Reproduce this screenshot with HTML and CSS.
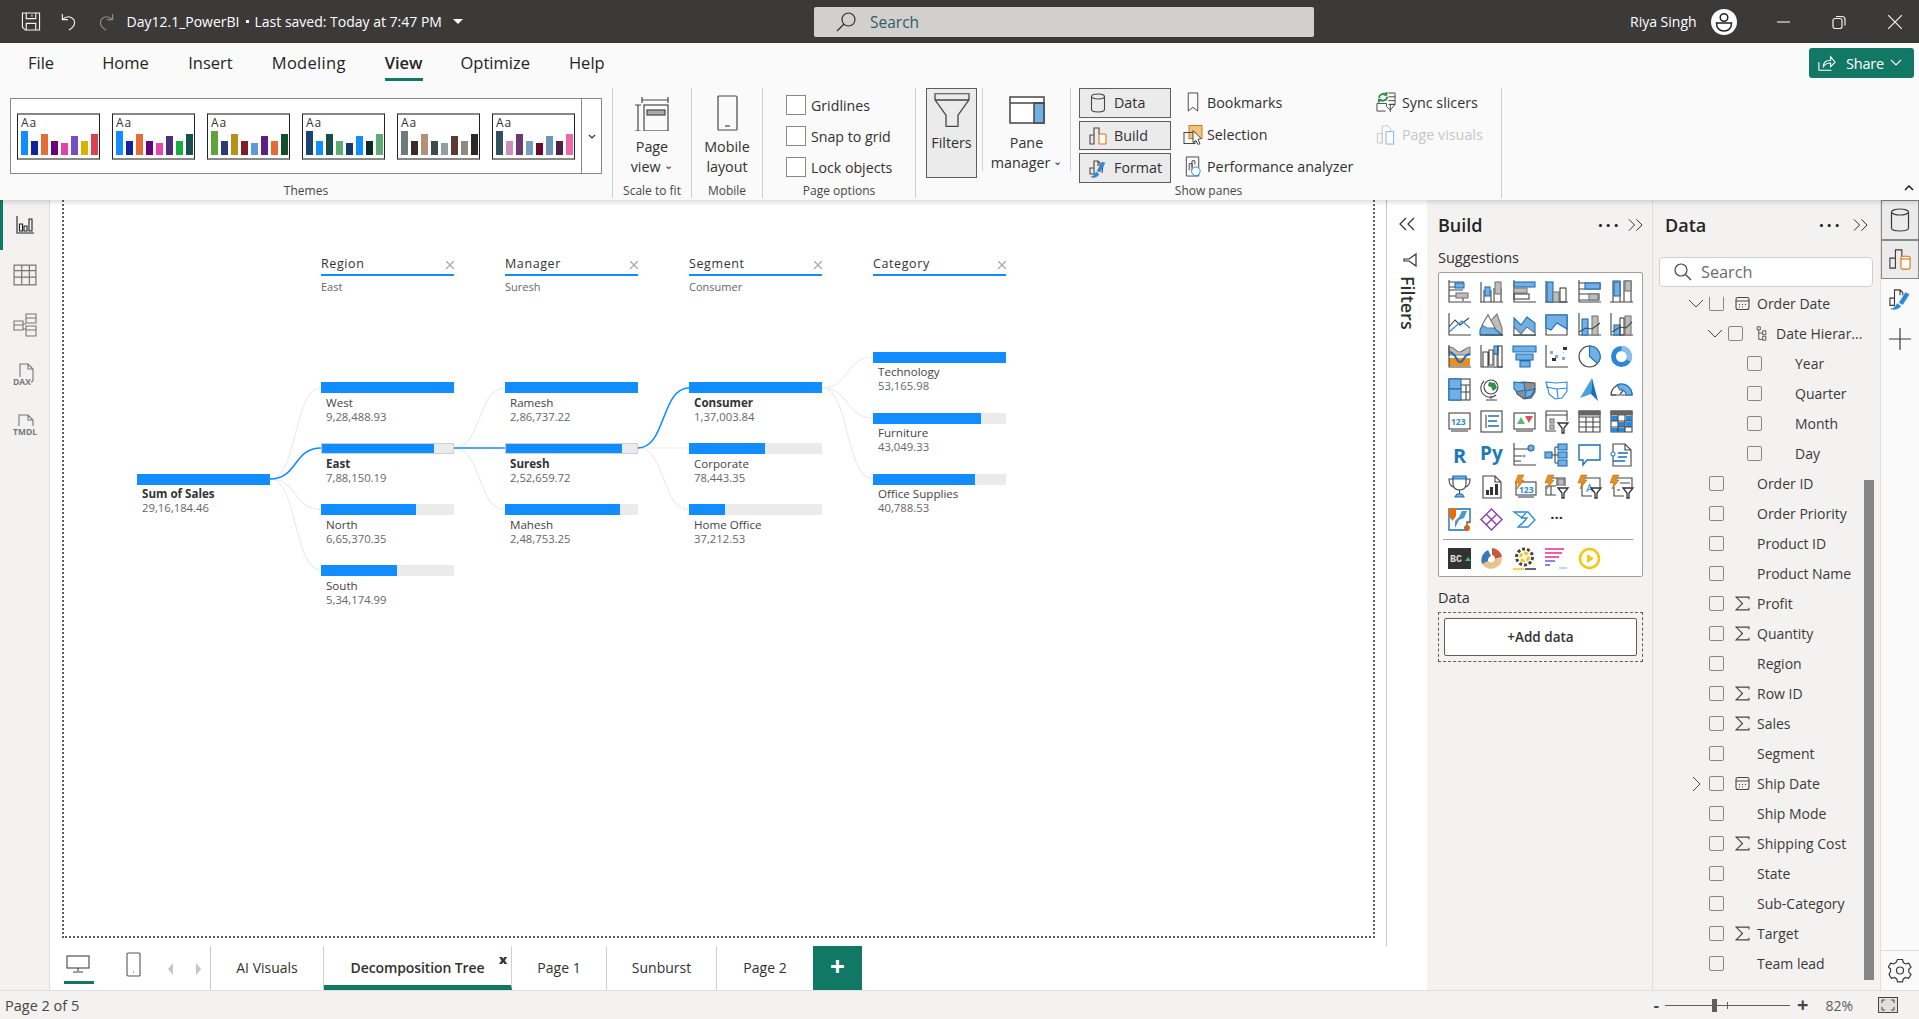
FILE: index.html
```html
<!DOCTYPE html>
<html lang="en">
<head>
<meta charset="utf-8">
<title>Day12.1_PowerBI</title>
<link rel="stylesheet" href="styles.css">
</head>
<body>
<header class="titlebar">
  <svg class="tb-save" viewBox="0 0 20 20"><path d="M1 1h18v18H4l-3-3zM5 1v6h10V1M5 19v-7h10v7M11 3v2"/></svg>
  <svg class="tb-undo" viewBox="0 0 16 20"><path d="M1 2v6h6M1 8c4-4 9-4 12 0 2 4 0 8-5 11"/></svg>
  <svg class="tb-redo" viewBox="0 0 16 20"><path d="M15 2v6H9M15 8c-4-4-9-4-12 0-2 4 0 8 5 11"/></svg>
  <span class="tb-file">Day12.1_PowerBI</span><span class="tb-dot"></span><span class="tb-saved">Last saved: Today at 7:47 PM</span><span class="tb-caret"></span>
  <div class="tb-search">
    <svg viewBox="0 0 20 20"><circle cx="12.5" cy="7.5" r="6.5"/><path d="M8 12l-7 7"/></svg>
    <span>Search</span>
  </div>
  <span class="tb-user">Riya Singh</span>
  <svg class="tb-avatar" viewBox="0 0 26 26"><circle cx="13" cy="13" r="13" fill="#fff"/><circle cx="13" cy="8.5" r="3.8" fill="none" stroke="#222" stroke-width="1.5"/><path d="M5.5 14h15c0 5-3 8-7.5 8s-7.5-3-7.5-8z" fill="none" stroke="#222" stroke-width="1.5"/></svg>
  <svg class="tb-min" viewBox="0 0 14 14"><path d="M0 7h14"/></svg>
  <svg class="tb-max" viewBox="0 0 14 14"><rect x="1" y="3.5" width="9" height="10" rx="2"/><path d="M4 1.5h6a3 3 0 0 1 3 3v6"/></svg>
  <svg class="tb-close" viewBox="0 0 14 14"><path d="M0 0l14 14M14 0L0 14"/></svg>
</header>

<section class="ribbon">
  <nav class="tabs">
    <span class="tab t-file">File</span>
    <span class="tab t-home">Home</span>
    <span class="tab t-insert">Insert</span>
    <span class="tab t-model">Modeling</span>
    <span class="tab tab-on t-view">View</span>
    <span class="tab t-opt">Optimize</span>
    <span class="tab t-help">Help</span>
    <button class="share">
      <svg viewBox="0 0 20 20"><path d="M1 9v9h14M6 14c0-5 3-7 8-7V3l5 6-5 5v-4c-4 0-6 1-8 4z"/></svg>
      <span>Share</span>
      <svg class="share-chev" viewBox="0 0 12 8"><path d="M1 1l5 5 5-5"/></svg>
    </button>
  </nav>
  <div class="toolbar">
    <div class="group g-themes">
      <div class="group-body">
        <div class="gallery">
          <div class="themes">
            <div class="theme"><span>Aa</span><svg viewBox="0 0 78 24"><rect x="0" y="0" width="7" height="24" fill="#118dff"/><rect x="10" y="10" width="7" height="14" fill="#12239e"/><rect x="20" y="3" width="7" height="21" fill="#e66c37"/><rect x="30" y="10" width="7" height="14" fill="#6b007b"/><rect x="40" y="12" width="7" height="12" fill="#e044a7"/><rect x="50" y="5" width="7" height="19" fill="#744ec2"/><rect x="60" y="10" width="7" height="14" fill="#d9b300"/><rect x="70" y="3" width="7" height="21" fill="#d64550"/></svg></div>
            <div class="theme"><span>Aa</span><svg viewBox="0 0 78 24"><rect x="0" y="0" width="7" height="24" fill="#118dff"/><rect x="10" y="10" width="7" height="14" fill="#12239e"/><rect x="20" y="3" width="7" height="21" fill="#e66c37"/><rect x="30" y="10" width="7" height="14" fill="#6b007b"/><rect x="40" y="12" width="7" height="12" fill="#e645ab"/><rect x="50" y="5" width="7" height="19" fill="#4a2f7e"/><rect x="60" y="10" width="7" height="14" fill="#1aab40"/><rect x="70" y="3" width="7" height="21" fill="#15524d"/></svg></div>
            <div class="theme"><span>Aa</span><svg viewBox="0 0 78 24"><rect x="0" y="0" width="7" height="24" fill="#60a33c"/><rect x="10" y="10" width="7" height="14" fill="#2e3b72"/><rect x="20" y="3" width="7" height="21" fill="#b3931c"/><rect x="30" y="10" width="7" height="14" fill="#7f1d2b"/><rect x="40" y="12" width="7" height="12" fill="#5d9ad6"/><rect x="50" y="5" width="7" height="19" fill="#5a1f87"/><rect x="60" y="10" width="7" height="14" fill="#e66c37"/><rect x="70" y="3" width="7" height="21" fill="#154d2f"/></svg></div>
            <div class="theme"><span>Aa</span><svg viewBox="0 0 78 24"><rect x="0" y="0" width="7" height="24" fill="#1a4373"/><rect x="10" y="10" width="7" height="14" fill="#118dff"/><rect x="20" y="3" width="7" height="21" fill="#1b4a4a"/><rect x="30" y="10" width="7" height="14" fill="#5fab76"/><rect x="40" y="12" width="7" height="12" fill="#143a6b"/><rect x="50" y="5" width="7" height="19" fill="#118dff"/><rect x="60" y="10" width="7" height="14" fill="#0d2b26"/><rect x="70" y="3" width="7" height="21" fill="#5fab76"/></svg></div>
            <div class="theme"><span>Aa</span><svg viewBox="0 0 78 24"><rect x="0" y="0" width="7" height="24" fill="#6d7b7b"/><rect x="10" y="10" width="7" height="14" fill="#3d2b27"/><rect x="20" y="3" width="7" height="21" fill="#b09179"/><rect x="30" y="10" width="7" height="14" fill="#3f4a4d"/><rect x="40" y="12" width="7" height="12" fill="#8e9fa0"/><rect x="50" y="5" width="7" height="19" fill="#5b3a30"/><rect x="60" y="10" width="7" height="14" fill="#8f8a80"/><rect x="70" y="3" width="7" height="21" fill="#2a2a2a"/></svg></div>
            <div class="theme"><span>Aa</span><svg viewBox="0 0 78 24"><rect x="0" y="0" width="7" height="24" fill="#35505f"/><rect x="10" y="10" width="7" height="14" fill="#cd8fb7"/><rect x="20" y="3" width="7" height="21" fill="#6a3a71"/><rect x="30" y="10" width="7" height="14" fill="#759dbd"/><rect x="40" y="12" width="7" height="12" fill="#6c0a2e"/><rect x="50" y="5" width="7" height="19" fill="#6a97b7"/><rect x="60" y="10" width="7" height="14" fill="#4a2349"/><rect x="70" y="3" width="7" height="21" fill="#ec67ab"/></svg></div>
          </div>
          <div class="gallery-more"><svg viewBox="0 0 8 5"><path d="M1 1l3 3 3-3"/></svg></div>
        </div>
      </div>
      <div class="group-label">Themes</div>
    </div>

    <div class="group g-scale">
      <div class="group-body big-col">
        <svg class="big-ic" viewBox="0 0 36 36"><path d="M8 2v6M8 5h26M34 2v6M1 10h6M4 10v26M1 36h6"/><rect x="10" y="10" width="24" height="26"/><rect x="13" y="15" width="18" height="5" fill="#aaa"/></svg>
        <div class="big-text">Page<br>view <i class="mini">⌄</i></div>
      </div>
      <div class="group-label">Scale to fit</div>
    </div>

    <div class="group g-mobile">
      <div class="group-body big-col">
        <svg class="big-ic mob" viewBox="0 0 21 36"><rect x="1" y="1" width="19" height="34" rx="1"/><path d="M8 31h5"/></svg>
        <div class="big-text">Mobile<br>layout</div>
      </div>
      <div class="group-label">Mobile</div>
    </div>

    <div class="group g-options">
      <div class="group-body opts">
        <label class="opt"><i></i>Gridlines</label>
        <label class="opt"><i></i>Snap to grid</label>
        <label class="opt"><i></i>Lock objects</label>
      </div>
      <div class="group-label">Page options</div>
    </div>

    <div class="group g-panes">
      <div class="group-body panes">
        <div class="filters-btn">
          <svg viewBox="0 0 36 36"><path d="M1 2h34v7L24 27v13h-12V27L1 9z" transform="scale(1 .86)"/><path d="M1 8h34" /></svg>
          <span>Filters</span>
        </div>
        <div class="pane-mgr">
          <svg viewBox="0 0 36 28"><rect x="1" y="1" width="34" height="26" fill="#fff"/><rect x="25" y="7" width="10" height="20" fill="#71afe5"/><path d="M1 7h34"/></svg>
          <div>Pane<br>manager<i class="mini"> ⌄</i></div>
        </div>
        <div class="pane-btns">
          <div class="pane-btn"><svg viewBox="0 0 16 20"><ellipse cx="8" cy="3.5" rx="6.5" ry="2.5"/><path d="M1.5 3.5v13c0 1.5 3 2.5 6.5 2.500s6.5-1 6.5-2.500v-13"/></svg>Data</div>
          <div class="pane-btn"><svg viewBox="0 0 18 20"><path d="M1 10h4v9H1zM5 19V3h5v6"/><rect class="or" x="10" y="9" width="7" height="10" rx="1"/></svg>Build</div>
          <div class="pane-btn"><svg viewBox="0 0 18 20"><path d="M1 10h4v6H1zM5 12V3h4v5M9 3l2 2v3M14 6l-1 9"/><path class="brush" d="M13 4l3 1-5 9-3-1zM7 14l3 2c-1 3-5 4-8 3 3-1 4-3 5-5z"/></svg>Format</div>
        </div>
        <div class="pane-links">
          <div class="pane-link"><svg viewBox="0 0 14 22"><path d="M2 1h10v19l-5-4-5 4z"/></svg>Bookmarks</div>
          <div class="pane-link"><svg viewBox="0 0 20 20"><rect class="sel" x="6" y="1" width="13" height="13"/><rect x="1" y="8" width="11" height="11"/><path class="cur" d="M10 6l8 8-3 1 2 4-2 1-2-4-3 2z"/></svg>Selection</div>
          <div class="pane-link"><svg viewBox="0 0 18 22"><path d="M2 1h13v20H2zM5 15V8h3v7M8 12V5h3v4"/><circle class="tim" cx="12" cy="16" r="4.5"/></svg>Performance analyzer</div>
        </div>
        <div class="pane-links sync">
          <div class="pane-link"><svg viewBox="0 0 21 22"><path d="M13 1h7v12h-7M13 5h7M13 9h7M1 12h10v3l4 4v-6h5l-5 6v2M1 12v8h9"/><path class="syn" d="M3 6a5 5 0 0 1 8-3M12 5a5 5 0 0 1-8 3M11 0v3H8M3 11V8h3"/></svg>Sync slicers</div>
          <div class="pane-link off"><svg viewBox="0 0 20 22"><path d="M1 10h5v10H1zM6 20V2h6l3 3v3"/><rect class="ph" x="10" y="8" width="8" height="13"/></svg>Page visuals</div>
        </div>
      </div>
      <div class="group-label">Show panes</div>
    </div>
  </div>
  <svg class="collapse-ribbon" viewBox="0 0 10 6"><path d="M1 5l4-4 4 4"/></svg>
</section>

<main class="main">
  <aside class="nav">
    <div class="nav-item nav-on"><svg viewBox="0 0 18 18"><path d="M1 0v17h17"/><path d="M3.5 8h3v7h-3zM8 10h3v5H8zM13 3h3v12h-3z"/></svg></div>
    <div class="nav-item"><svg viewBox="0 0 22 20"><path d="M1 1h20v18H1zM1 6h20M1 12h20M8 1v18M15 1v18"/></svg></div>
    <div class="nav-item"><svg viewBox="0 0 24 24"><path d="M1 8h9v9H1zM13 1h10v9H13zM13 13h10v10H13zM13 5h10M13 17h10M1 12h9M10 11h3M10 16h3"/></svg></div>
    <div class="nav-item"><svg viewBox="0 0 24 24"><path d="M7 14V1h8l5 5v10c0 2-1 3-2 3M15 1v5h5"/><text x="0" y="22" class="nav-t">DAX</text></svg></div>
    <div class="nav-item"><svg viewBox="0 0 24 24"><path d="M6 13V2h9l5 5v6M15 2v5h5"/><text x="0" y="22" class="nav-t">TMDL</text></svg></div>
  </aside>

  <div class="center">
    <div class="canvas-row">
      <div class="canvas">
        <svg class="links" viewBox="50 200 1337 746">
          <path class="lk" d="M270 479C298 479 293 388 321 388"/>
          <path class="lk" d="M270 479C298 479 293 509.5 321 509.5"/>
          <path class="lk" d="M270 479C298 479 293 570 321 570"/>
          <path class="lk-on" d="M270 479C298 479 293 448 321 448"/>
          <path class="lk" d="M454 448C482 448 477 388 505 388"/>
          <path class="lk" d="M454 448C482 448 477 509.5 505 509.5"/>
          <path class="lk-on" d="M454 448H505"/>
          <path class="lk" d="M638 448H689"/>
          <path class="lk" d="M638 448C666 448 661 509.5 689 509.5"/>
          <path class="lk-on" d="M638 448C666 448 661 388 689 388"/>
          <path class="lk" d="M822 388C850 388 845 357 873 357"/>
          <path class="lk" d="M822 388C850 388 845 418 873 418"/>
          <path class="lk" d="M822 388C850 388 845 479 873 479"/>
        </svg>
        <div class="tree">
          <div class="col col-root">
            <div class="node">
              <div class="track"><div class="fill" style="width:100%"></div></div>
              <div class="lbl sel-l">Sum of Sales</div><div class="val">29,16,184.46</div>
            </div>
          </div>
          <div class="col">
            <div class="head"><span>Region</span><svg viewBox="0 0 8 8"><path d="M0 0l8 8M8 0L0 8"/></svg></div>
            <div class="sub">East</div>
            <div class="nodes">
              <div class="node"><div class="track"><div class="fill" style="width:100%"></div></div><div class="lbl">West</div><div class="val">9,28,488.93</div></div>
              <div class="node"><div class="track picked"><div class="fill" style="width:85%"></div></div><div class="lbl sel-l">East</div><div class="val">7,88,150.19</div></div>
              <div class="node"><div class="track"><div class="fill" style="width:71.6%"></div></div><div class="lbl">North</div><div class="val">6,65,370.35</div></div>
              <div class="node"><div class="track"><div class="fill" style="width:57.5%"></div></div><div class="lbl">South</div><div class="val">5,34,174.99</div></div>
            </div>
          </div>
          <div class="col">
            <div class="head"><span>Manager</span><svg viewBox="0 0 8 8"><path d="M0 0l8 8M8 0L0 8"/></svg></div>
            <div class="sub">Suresh</div>
            <div class="nodes">
              <div class="node"><div class="track"><div class="fill" style="width:100%"></div></div><div class="lbl">Ramesh</div><div class="val">2,86,737.22</div></div>
              <div class="node"><div class="track picked"><div class="fill" style="width:88%"></div></div><div class="lbl sel-l">Suresh</div><div class="val">2,52,659.72</div></div>
              <div class="node"><div class="track"><div class="fill" style="width:86.7%"></div></div><div class="lbl">Mahesh</div><div class="val">2,48,753.25</div></div>
            </div>
          </div>
          <div class="col">
            <div class="head"><span>Segment</span><svg viewBox="0 0 8 8"><path d="M0 0l8 8M8 0L0 8"/></svg></div>
            <div class="sub">Consumer</div>
            <div class="nodes">
              <div class="node"><div class="track"><div class="fill" style="width:100%"></div></div><div class="lbl sel-l">Consumer</div><div class="val">1,37,003.84</div></div>
              <div class="node"><div class="track"><div class="fill" style="width:57.3%"></div></div><div class="lbl">Corporate</div><div class="val">78,443.35</div></div>
              <div class="node"><div class="track"><div class="fill" style="width:27%"></div></div><div class="lbl">Home Office</div><div class="val">37,212.53</div></div>
            </div>
          </div>
          <div class="col col-last">
            <div class="head"><span>Category</span><svg viewBox="0 0 8 8"><path d="M0 0l8 8M8 0L0 8"/></svg></div>
            <div class="sub"></div>
            <div class="nodes">
              <div class="node"><div class="track"><div class="fill" style="width:100%"></div></div><div class="lbl">Technology</div><div class="val">53,165.98</div></div>
              <div class="node"><div class="track"><div class="fill" style="width:81%"></div></div><div class="lbl">Furniture</div><div class="val">43,049.33</div></div>
              <div class="node"><div class="track"><div class="fill" style="width:77%"></div></div><div class="lbl">Office Supplies</div><div class="val">40,788.53</div></div>
            </div>
          </div>
        </div>
      </div>
      <aside class="filters">
        <svg class="f-coll" viewBox="0 0 16 14"><path d="M7 1L1 7l6 6M15 1L9 7l6 6"/></svg>
        <svg class="f-ic" viewBox="0 0 14 14"><path d="M13 1v12L6 8H1V6h5z"/></svg>
        <span class="f-text">Filters</span>
      </aside>
    </div>
    <div class="pagebar">
      <div class="views">
        <div class="view-btn view-on"><svg viewBox="0 0 24 18"><rect x="1" y="1" width="22" height="12" fill="#fff"/><path d="M12 13v3M7 17h10"/></svg></div>
        <svg class="phone" viewBox="0 0 15 25"><rect x="1" y="1" width="13" height="23" rx="1"/><path d="M7 20h1"/></svg>
        <i class="arr arr-l"></i><i class="arr arr-r"></i>
      </div>
      <div class="ptab w-ai">AI Visuals</div>
      <div class="ptab ptab-on w-dt">Decomposition Tree<b>x</b></div>
      <div class="ptab w-p1">Page 1</div>
      <div class="ptab w-sb">Sunburst</div>
      <div class="ptab w-p2">Page 2</div>
      <div class="ptab-add">+</div>
    </div>
  </div>

  <aside class="build">
    <div class="pane-head"><h2>Build</h2><span class="dots">···</span><svg class="dbl" viewBox="0 0 16 14"><path d="M1 1l6 6-6 6M9 1l6 6-6 6"/></svg></div>
    <div class="p-label">Suggestions</div>
    <div class="viz-box">
      <div class="viz-grid">
        <svg class="vi" viewBox="0 0 23 23"><path d="M1 0v22h22M1 2h14v5H1zM1 10h14M1 16h14v5"/><rect class="bl" x="7" y="3" width="9" height="5"/><rect class="gr" x="8" y="13" width="12" height="5"/></svg>
        <svg class="vi" viewBox="0 0 23 23"><path d="M0 22h23M1 2v20M4 10v12h7V10M14 8v14h7V8"/><rect class="bl" x="5" y="7" width="5" height="9"/><rect class="gr" x="15" y="2" width="6" height="12"/></svg>
        <svg class="vi" viewBox="0 0 23 23"><path d="M1 0v22h22"/><rect class="bl" x="1" y="2" width="21" height="5"/><rect class="gr" x="1" y="8" width="13" height="5"/><rect x="1" y="14" width="15" height="5"/></svg>
        <svg class="vi" viewBox="0 0 23 23"><path d="M0 22h23M1 1v21"/><rect class="bl" x="2" y="2" width="6" height="20"/><rect class="gr" x="8" y="12" width="6" height="10"/><rect x="15" y="8" width="6" height="14"/></svg>
        <svg class="vi" viewBox="0 0 23 23"><path d="M1 0v22h22M1 3h21v6H1zM1 14h20v6H1z"/><rect class="bl" x="7" y="3" width="15" height="6"/><rect class="gr" x="11" y="14" width="9" height="6"/></svg>
        <svg class="vi" viewBox="0 0 23 23"><path d="M0 22h23M3 1h7v21H3zM14 1h7v21h-7z"/><rect class="bl" x="4" y="2" width="6" height="14"/><rect class="gr" x="15" y="1" width="6" height="10"/></svg>

        <svg class="vi" viewBox="0 0 23 23"><path d="M1 0v22h22M1 14L7 7l5 5 9-7"/><path class="bs" d="M1 19l7-6 6-5 8 7"/></svg>
        <svg class="vi" viewBox="0 0 23 23"><path class="gr" d="M10 9l4-5 3-3 5 14v7H6z"/><path class="bl" d="M0 22V17L8 2l7 14 7 6z"/><path class="wh" d="M8 2l-6 10 5 3 8 0z"/><path d="M0 22h23"/></svg>
        <svg class="vi" viewBox="0 0 23 23"><path class="bl" d="M1 5l7 7 6-8 8 6v12H1z"/><path class="wh" d="M1 14l7 7 6-7 8 6v2H1z"/><path d="M0 22h23"/></svg>
        <svg class="vi" viewBox="0 0 23 23"><path d="M1 2h21v20H1z"/><path class="bl" d="M1 2h21v14l-10-6-6 7-5-2z"/></svg>
        <svg class="vi" viewBox="0 0 23 23"><path d="M1 0v22h22"/><rect class="bl" x="4" y="6" width="6" height="16"/><rect class="gr" x="14" y="3" width="6" height="19"/><path d="M1 19l7-4 6 1 8-6"/></svg>
        <svg class="vi" viewBox="0 0 23 23"><path d="M1 0v22h22"/><rect class="bl" x="4" y="12" width="6" height="10"/><rect class="gr" x="15" y="3" width="6" height="19"/><rect x="10" y="5" width="4" height="17"/><path d="M2 19l8-5 6 1 6-6"/></svg>

        <svg class="vi" viewBox="0 0 23 23"><path class="gr" d="M1 2c6-1 7 6 11 5s6-5 10-5v8H1z"/><path class="or2" d="M1 13h21v8H1z"/><path class="bs2" d="M1 7c7 0 7 10 11 10s4-8 10-8"/><path d="M1 0v22h22"/></svg>
        <svg class="vi" viewBox="0 0 23 23"><path d="M1 0v22h22M3 7h5v15H3zM9 5h4v15H9z"/><rect class="wh" x="14" y="9" width="3" height="13"/><rect class="bl" x="14" y="1" width="4" height="8"/><rect x="18" y="1" width="4" height="21"/></svg>
        <svg class="vi" viewBox="0 0 23 23"><path class="bl" d="M0 1h23v6H0zM3 9h17v6H3zM7 16h10v6H7z"/></svg>
        <svg class="vi" viewBox="0 0 23 23"><path d="M1 0v22h22"/><path class="fk" d="M18 2h4v3h-4zM7 13h4v3H7z"/><path class="fb" d="M5 6h3v3H5zM10 10h3v3h-3zM17 12h3v3h-3zM18 7h1v1h-1z"/></svg>
        <svg class="vi" viewBox="0 0 23 23"><circle cx="11.5" cy="11.5" r="10.5" fill="#fff"/><path class="bl" d="M11.5 1v10.5l8 7a10.5 10.5 0 0 0-8-17.5z"/></svg>
        <svg class="vi" viewBox="0 0 23 23"><circle class="ring" cx="11.5" cy="11.5" r="8"/><path class="ring2" d="M11.5 3.5a8 8 0 0 1 7 12"/></svg>

        <svg class="vi" viewBox="0 0 23 23"><rect x="1" y="1" width="21" height="21"/><rect class="bl" x="1" y="1" width="12" height="10"/><rect class="bl" x="1" y="11" width="12" height="11"/><path d="M13 7h9M18 7v15M13 14h9"/></svg>
        <svg class="vi" viewBox="0 0 23 23"><circle cx="11" cy="9" r="7" class="earth"/><path class="land" d="M9 4l6 1 2 5-4 3-2-4-3-1z"/><path d="M4 3a9 9 0 0 0 12 14M11 18v3M6 22h11"/></svg>
        <svg class="vi" viewBox="0 0 23 23"><path class="gr2" d="M1 5l9-1 12 1v9l-4 6-7 1-7-5z"/><path class="bl" d="M1 4l10 1 1 7-8 2-3-3zM13 13l9-2-4 7-6 2z"/></svg>
        <svg class="vi" viewBox="0 0 23 23"><path class="wb" d="M1 4l10 1 11-1v9l-5 7-7 1-6-5-1-5z"/><path class="bs" d="M1 9l11 2 1 9M12 11l10-1"/></svg>
        <svg class="vi" viewBox="0 0 23 23"><path class="arrow" d="M14 0L2 20l11-4z"/><path class="arrow2" d="M14 0l6 23-7-7z"/></svg>
        <svg class="vi" viewBox="0 0 23 23"><path d="M1 17a10.5 10.5 0 0 1 21 0z" fill="#fff"/><path class="bl" d="M7 7a10.5 10.5 0 0 1 15 10h-6a5 5 0 0 0-6-5z"/><path d="M1 17h5M10 16l3-3"/></svg>

        <svg class="vi" viewBox="0 0 23 23"><rect x="1" y="3" width="21" height="16"/><path d="M3 21h17"/><text class="t123" x="3" y="15">123</text></svg>
        <svg class="vi" viewBox="0 0 23 23"><rect x="1" y="1" width="21" height="21"/><path d="M6 5v13"/><path class="bs3" d="M8 6h11M8 11h9M8 16h11"/></svg>
        <svg class="vi" viewBox="0 0 23 23"><rect x="1" y="3" width="21" height="16"/><path d="M3 21h17"/><path class="tg" d="M4 14l4-7 4 7z"/><path class="tr" d="M12 6h8l-4 7z"/></svg>
        <svg class="vi" viewBox="0 0 23 23"><path d="M1 1h21v10M1 5h21M1 1v20h10"/><rect class="gr" x="5" y="9" width="4" height="4"/><rect class="gr" x="5" y="15" width="4" height="4"/><path class="fn" d="M13 13h10l-4 5v5h-2v-5z"/></svg>
        <svg class="vi" viewBox="0 0 23 23"><path d="M1 1h21v21H1zM1 7h21M1 12h21M1 17h21M8 7v15M15 7v15"/><path class="top" d="M1 1h21v4H1z"/></svg>
        <svg class="vi" viewBox="0 0 23 23"><path d="M1 1h21v21H1z"/><path class="top" d="M1 1h21v4H1z"/><path class="mat" d="M8 6v5H1V6zM22 6v5h-6V6zM15 12v5H8v-5zM22 12v5h-6v-5zM8 18v4H1v-4zM15 18v4H8v-4z"/><path d="M8 5v17M15 5v17M1 11h21M1 17h21"/></svg>

        <svg class="vi" viewBox="0 0 23 23"><text class="tr-l" x="5" y="20">R</text></svg>
        <svg class="vi wide" viewBox="0 0 23 23"><text class="tr-l py" x="0" y="17">Py</text></svg>
        <svg class="vi" viewBox="0 0 23 23"><path d="M1 0v22h22M1 6h14M1 13h8M1 18h7"/><circle class="bl2" cx="18" cy="5" r="3"/><circle class="gc" cx="11" cy="13" r="1.5"/></svg>
        <svg class="vi" viewBox="0 0 23 23"><rect class="bl" x="0" y="9" width="7" height="6"/><rect class="bl" x="13" y="1" width="9" height="6"/><rect class="bl" x="13" y="9" width="9" height="6"/><rect class="bl" x="13" y="17" width="9" height="6"/><path d="M7 12h6M10 4v16M10 4h3M10 20h3"/></svg>
        <svg class="vi" viewBox="0 0 23 23"><path class="bub" d="M1 2h21v15H9l-4 5v-5H1z"/></svg>
        <svg class="vi" viewBox="0 0 23 23"><path d="M3 1h12l6 6v16H3zM15 1v6h6"/><circle class="bc" cx="3" cy="11" r="2"/><path class="bs3" d="M8 10h10M8 14h9M3 18h12"/></svg>

        <svg class="vi" viewBox="0 0 23 23"><path d="M5 2h13v7c0 4-3 6-6.5 6S5 13 5 9zM5 4H1c0 5 2 7 4 8M18 4h4c0 5-2 7-4 8"/><path class="bl" d="M5 1h13v3H5zM9 19h5l2 3H7z"/><path d="M11.5 15v4"/></svg>
        <svg class="vi" viewBox="0 0 23 23"><path d="M3 1h12l6 6v16H3zM15 1v6h6"/><path class="fk" d="M6 15h3v5H6zM10 12h3v8h-3zM15 9h3v11h-3z"/></svg>
        <svg class="vi" viewBox="0 0 23 23"><rect x="3" y="7" width="20" height="13"/><path d="M5 22h16"/><text class="t123" x="6" y="18">123</text><path class="bolt" d="M5 0h6L8 5h3l-7 9 2-6H2z"/></svg>
        <svg class="vi" viewBox="0 0 23 23"><path d="M6 3h14v8M1 11h10M1 11v9h10M12 3v8M6 11v9"/><rect class="gr" x="13" y="4" width="6" height="6"/><path class="fn" d="M13 13h10l-4 5v5h-2v-5z"/><path class="bolt" d="M3 0h6L6 5h3l-7 9 2-6H0z"/></svg>
        <svg class="vi" viewBox="0 0 23 23"><path d="M6 3h16v9M4 12v9h10M4 8v4"/><text class="ta" x="8" y="17">A</text><path class="fn" d="M13 13h10l-4 5v5h-2v-5z"/><path class="bolt" d="M3 0h6L6 5h3l-7 9 2-6H0z"/></svg>
        <svg class="vi" viewBox="0 0 23 23"><path d="M6 3h16v9M4 12v9h10M10 8h10M7 15h3"/><path class="fn" d="M13 13h10l-4 5v5h-2v-5z"/><path class="bolt" d="M3 0h6L6 5h3l-7 9 2-6H0z"/></svg>

        <svg class="vi" viewBox="0 0 23 23"><path class="arc" d="M1 1h21v13h-3v8H1z"/><path class="arc2" d="M7 20l4-8 5-2 3-7h-5l-3 6-4 4z"/><path class="pin" d="M1 0h7v8l-3.5 5L1 8z"/><circle class="dot-o" cx="19" cy="20" r="3"/><circle class="dot-o" cx="21" cy="14" r="1.5"/></svg>
        <svg class="vi" viewBox="0 0 23 23"><path class="pa" d="M11.5 1L22 11.5 11.5 22 1 11.5zM6 6l5.5 5.5L6 17M17 6l-5.5 5.5L17 17"/></svg>
        <svg class="vi" viewBox="0 0 23 23"><path class="au" d="M1 4h14l7 8-7 7H5l7-7z"/><path class="au" d="M8 10l6 0-6 7M13 5l-5 5"/></svg>
        <span class="more-viz">···</span>
        <span></span><span></span>
      </div>
      <div class="viz-sep"></div>
      <div class="viz-grid">
        <svg class="vi" viewBox="0 0 23 23"><rect x="0" y="1" width="23" height="21" fill="#333" stroke="none"/><text class="tbc" x="2" y="15">BC</text><path class="tg2" d="M17 14l3-4 3 4z"/></svg>
        <svg class="vi" viewBox="0 0 23 23"><path class="c1" d="M12 1a11 11 0 0 1 10 9l-7 2a4 4 0 0 0-3-4z"/><path class="c2" d="M22 11a11 11 0 0 1-20 6l6-3a4 4 0 0 0 7-2z"/><path class="c3" d="M2 17A11 11 0 0 1 8 3l3 6a5 5 0 0 0-3 5z"/></svg>
        <svg class="vi" viewBox="0 0 23 23"><circle class="y1" cx="11.5" cy="10" r="8"/><circle class="y2" cx="11.5" cy="10" r="4"/><path class="y3" d="M0 22h11"/><path class="y4" d="M12 22h11"/></svg>
        <svg class="vi" viewBox="0 0 23 23"><path class="p1" d="M0 2h19M0 6h17M0 10h14"/><path class="p2" d="M0 14h10M0 18h5"/><path class="p3" d="M14 21h8"/></svg>
        <svg class="vi" viewBox="0 0 23 23"><circle class="y5" cx="11.5" cy="11.5" r="9.5"/><path class="y6" d="M9 7l7 4.5-7 4.5z"/></svg>
        <span></span>
      </div>
    </div>
    <div class="p-label p-data">Data</div>
    <div class="add-wrap"><button class="add-btn">+Add data</button></div>
  </aside>

  <aside class="data">
    <div class="pane-head"><h2>Data</h2><span class="dots">···</span><svg class="dbl" viewBox="0 0 16 14"><path d="M1 1l6 6-6 6M9 1l6 6-6 6"/></svg></div>
    <div class="d-search"><svg viewBox="0 0 18 18"><circle cx="7" cy="7" r="6"/><path d="M11.5 11.5L17 17"/></svg><span>Search</span></div>
    <div class="d-list">
      <div class="row first"><span class="chev"><svg viewBox="0 0 14 8"><path d="M0 0l7 7 7-7"/></svg></span><i class="cb"></i><span class="ico"><svg viewBox="0 0 15 14"><rect x="1" y="1" width="13" height="12" rx="2"/><path d="M1 4.5h13M4 8h1M7 8h1M10 8h1M4 10.5h1M7 10.5h1"/></svg></span>Order Date</div>
      <div class="row l1"><span class="chev"><svg viewBox="0 0 14 8"><path d="M0 0l7 7 7-7"/></svg></span><i class="cb"></i><span class="ico"><svg viewBox="0 0 15 19"><path d="M2 1h4v4H2zM4 5v12h5M4 9h5M9 6h4v5H9zM9 13h4v5H9z"/></svg></span>Date Hierar...</div>
      <div class="row l2"><span class="chev"></span><i class="cb"></i><span class="ico"></span>Year</div>
      <div class="row l2"><span class="chev"></span><i class="cb"></i><span class="ico"></span>Quarter</div>
      <div class="row l2"><span class="chev"></span><i class="cb"></i><span class="ico"></span>Month</div>
      <div class="row l2"><span class="chev"></span><i class="cb"></i><span class="ico"></span>Day</div>
      <div class="row"><span class="chev"></span><i class="cb"></i><span class="ico"></span>Order ID</div>
      <div class="row"><span class="chev"></span><i class="cb"></i><span class="ico"></span>Order Priority</div>
      <div class="row"><span class="chev"></span><i class="cb"></i><span class="ico"></span>Product ID</div>
      <div class="row"><span class="chev"></span><i class="cb"></i><span class="ico"></span>Product Name</div>
      <div class="row"><span class="chev"></span><i class="cb"></i><span class="ico"><svg viewBox="0 0 14 14"><path d="M13 3V1H1l6 6-6 6h12v-2"/></svg></span>Profit</div>
      <div class="row"><span class="chev"></span><i class="cb"></i><span class="ico"><svg viewBox="0 0 14 14"><path d="M13 3V1H1l6 6-6 6h12v-2"/></svg></span>Quantity</div>
      <div class="row"><span class="chev"></span><i class="cb"></i><span class="ico"></span>Region</div>
      <div class="row"><span class="chev"></span><i class="cb"></i><span class="ico"><svg viewBox="0 0 14 14"><path d="M13 3V1H1l6 6-6 6h12v-2"/></svg></span>Row ID</div>
      <div class="row"><span class="chev"></span><i class="cb"></i><span class="ico"><svg viewBox="0 0 14 14"><path d="M13 3V1H1l6 6-6 6h12v-2"/></svg></span>Sales</div>
      <div class="row"><span class="chev"></span><i class="cb"></i><span class="ico"></span>Segment</div>
      <div class="row"><span class="chev"><svg class="chev-r" viewBox="0 0 8 14"><path d="M0 0l7 7-7 7"/></svg></span><i class="cb"></i><span class="ico"><svg viewBox="0 0 15 14"><rect x="1" y="1" width="13" height="12" rx="2"/><path d="M1 4.5h13M4 8h1M7 8h1M10 8h1M4 10.5h1M7 10.5h1"/></svg></span>Ship Date</div>
      <div class="row"><span class="chev"></span><i class="cb"></i><span class="ico"></span>Ship Mode</div>
      <div class="row"><span class="chev"></span><i class="cb"></i><span class="ico"><svg viewBox="0 0 14 14"><path d="M13 3V1H1l6 6-6 6h12v-2"/></svg></span>Shipping Cost</div>
      <div class="row"><span class="chev"></span><i class="cb"></i><span class="ico"></span>State</div>
      <div class="row"><span class="chev"></span><i class="cb"></i><span class="ico"></span>Sub-Category</div>
      <div class="row"><span class="chev"></span><i class="cb"></i><span class="ico"><svg viewBox="0 0 14 14"><path d="M13 3V1H1l6 6-6 6h12v-2"/></svg></span>Target</div>
      <div class="row"><span class="chev"></span><i class="cb"></i><span class="ico"></span>Team lead</div>
    </div>
    <div class="scrollbar"></div>
  </aside>

  <aside class="rail">
    <div class="rail-btn on"><svg viewBox="0 0 20 24"><ellipse cx="10" cy="4" rx="8.5" ry="3"/><path d="M1.5 4v16c0 2 4 3 8.5 3s8.5-1 8.5-3V4"/></svg></div>
    <div class="rail-btn on"><svg viewBox="0 0 24 24"><path d="M1 11h6v11H1zM7 22V2h7v7"/><rect class="or" x="13" y="9" width="10" height="14" rx="2"/><path class="or" d="M13 12h10"/></svg></div>
    <div class="rail-btn"><svg viewBox="0 0 24 24"><path d="M1 11h5v8H1zM6 13V2h6v6M12 2l3 3v3"/><path class="brush" d="M18 5l4 2-7 11-4-2zM9 17l4 3c-2 3-7 4-11 3 4-1 5-3 7-6z"/></svg></div>
    <div class="rail-btn"><svg viewBox="0 0 22 22"><path d="M0 11h22M11 0v22"/></svg></div>
    <div class="rail-gear"><svg viewBox="0 0 24 24"><path d="M9.5 1h5l.8 3 2.4 1.4 3-.8 2.3 4-2.200 2.200v2.800l2.200 2.200-2.300 4-3-.8-2.400 1.400-.8 3h-5l-.8-3-2.400-1.400-3 .8-2.300-4L2.500 13.200v-2.800L.3 8.600l2.300-4 3 .8L8 4z" transform="translate(0 -.5)"/><circle cx="12" cy="11.500" r="3.500"/></svg></div>
  </aside>
</main>

<footer class="status">
  <span class="st-page">Page 2 of 5</span>
  <div class="zoom">
    <span class="z-minus">-</span>
    <div class="z-track"><i class="z-thumb"></i><i class="z-tick"></i></div>
    <span class="z-plus">+</span>
    <span class="z-val">82%</span>
    <svg class="z-fit" viewBox="0 0 20 16"><rect x=".5" y=".5" width="19" height="15" fill="#e1dfdd"/><path d="M4 6V3h3M13 3h3v3M16 10v3h-3M7 13H4v-3"/></svg>
  </div>
</footer>
</body>
</html>
```
FILE: styles.css
```css
* { box-sizing: border-box; }
html, body { margin: 0; padding: 0; }
body {
  width: 1919px; height: 1019px; overflow: hidden;
  display: flex; flex-direction: column;
  font-family: "Open Sans", "Noto Sans", sans-serif;
  color: #323130; background: #f3f2f1;
}
svg { display: block; fill: none; }

/* title bar */
.titlebar {
  height: 43px; flex: none; background: #3b3a39; color: #fff;
  display: flex; align-items: center; font-size: 14px;
  position: relative;
}
.titlebar svg { stroke: #f3f2f1; stroke-width: 1.2; flex: none; }
.tb-save { width: 20px; height: 19px; margin-left: 21px; }
.tb-undo { width: 16px; height: 19px; margin-left: 20px; }
.tb-redo { width: 16px; height: 19px; margin-left: 21px; opacity: .45; }
.tb-file { margin-left: 12.5px; width: 112px; flex: none; white-space: nowrap; }
.tb-dot { width: 3px; height: 3px; background: #fff; margin: 0 6px 0 7px; flex: none; }
.tb-saved { width: 190px; flex: none; white-space: nowrap; }
.tb-caret { width: 0; height: 0; border: 5px solid transparent; border-top: 5px solid #fff; border-bottom: 0; margin-left: 8px; flex: none; }
.tb-search {
  width: 500px; height: 30px; margin-left: 351.5px; background: #d2d0ce; border-radius: 2px; flex: none;
  display: flex; align-items: center; padding-left: 22px; color: #2f5d62; font-size: 15.5px;
}
.titlebar .tb-search svg { width: 20px; height: 20px; stroke: #323130; }
.tb-search span { margin-left: 14px; }
.tb-user { margin-left: 316px; width: 81px; flex: none; white-space: nowrap; }
.titlebar .tb-avatar { width: 26px; height: 26px; stroke: none; }
.tb-min { width: 13px; height: 14px; margin-left: 40px; }
.tb-max { width: 14px; height: 14px; margin-left: 42px; }
.tb-close { width: 14px; height: 14px; margin-left: 42px; }

/* ribbon */
.ribbon {
  height: 157px; flex: none; background: #fafafa; position: relative; z-index: 2;
  box-shadow: 0 2px 5px rgba(0,0,0,.16);
}
.tabs { height: 45px; position: relative; display: flex; font-size: 16.5px; }
.tab { height: 38px; line-height: 40px; color: #252423; }
.t-file { margin-left: 28px; }
.t-home { margin-left: 48px; }
.t-insert { margin-left: 39.5px; }
.t-model { margin-left: 39px; letter-spacing: .3px; }
.t-view { margin-left: 39px; }
.t-opt { margin-left: 38px; }
.t-help { margin-left: 39px; }
.tab-on { font-weight: 600; border-bottom: 3px solid #117865; }
.share {
  position: absolute; left: 1809px; top: 5px; width: 105px; height: 30px; border: 0; border-radius: 3px;
  background: #117865; color: #fff; font: 14.5px "Open Sans", sans-serif;
  display: flex; align-items: center; padding: 0 0 0 9px;
}
.share svg { width: 18px; height: 18px; stroke: #fff; stroke-width: 1.2; }
.share span { margin-left: 10px; letter-spacing: -.2px; }
.share .share-chev { width: 12px; height: 8px; margin-left: 6px; }
.toolbar { height: 110px; display: flex; }
.group { display: flex; flex-direction: column; border-right: 1px solid #d2d0ce; position: relative; flex: none; }
.group-body { height: 95px; }
.group-label { font-size: 12px; color: #484644; text-align: center; line-height: 16px; height: 15px; white-space: nowrap; }
.g-themes { width: 613px; }
.g-scale { width: 79px; }
.g-mobile { width: 71px; }
.g-options { width: 153px; }
.g-panes { width: 586px; }
.gallery { margin: 10px 0 0 10px; width: 592px; height: 76px; border: 1px solid #8a8886; background: #fff; display: flex; }
.themes { width: 570px; display: flex; gap: 12px; padding: 14px 0 0 6px; }
.theme { width: 83px; height: 47px; border: 1px solid #222; border-top: 2px solid #8a8886; border-bottom: 2px solid #8a8886; position: relative; background: #fff; flex: none; }
.theme span { position: absolute; left: 3px; top: 0; font-size: 12px; line-height: 16px; color: #333; letter-spacing: 1px; }
.theme svg { position: absolute; left: 3px; top: 16px; width: 78px; height: 24px; }
.gallery-more { flex: 1; border-left: 1px solid #8a8886; display: flex; align-items: center; justify-content: center; }
.gallery-more svg { width: 8px; height: 5px; stroke: #323130; stroke-width: 1.2; }
.big-col { display: flex; flex-direction: column; align-items: center; padding-top: 7px; }
.big-ic { width: 36px; height: 36px; stroke: #484644; stroke-width: 1.2; }
.big-ic.mob { width: 21px; }
.big-text { margin-top: 6px; font-size: 14.3px; line-height: 20px; text-align: center; color: #323130; }
.mini { font-style: normal; font-size: 11px; position: relative; top: -3px; }
.opts { padding: 7px 0 0 23px; display: flex; flex-direction: column; gap: 11px; }
.opt { display: flex; align-items: center; font-size: 14.2px; height: 20px; color: #323130; }
.opt i { width: 20px; height: 20px; border: 1px solid #8a8886; background: #fff; margin-right: 5px; flex: none; }
.panes { position: relative; display: flex; }
.filters-btn { margin: 0 0 0 10px; width: 51px; flex: none; height: 90px; background: #ebebeb; border: 1px solid #605e5c; display: flex; flex-direction: column; align-items: center; font-size: 14.3px; }
.filters-btn svg { width: 36px; height: 36px; margin-top: 3px; stroke: #484644; stroke-width: 1.3; }
.filters-btn span { margin-top: 5px; }
.pane-mgr { width: 89px; flex: none; margin-left: 5px; height: 83px; border-left: 1px solid #d2d0ce; border-right: 1px solid #d2d0ce; text-align: center; font-size: 14.3px; line-height: 20px; padding-top: 8px; white-space: nowrap; }
.pane-mgr svg { width: 36px; height: 28px; margin: 0 auto 9px; stroke: #484644; stroke-width: 1.5; }
.pane-btns { margin-left: 8px; flex: none; display: flex; flex-direction: column; gap: 3px; }
.pane-btn { width: 92px; height: 29.5px; background: #ebebeb; border: 1px solid #605e5c; display: flex; align-items: center; font-size: 14.3px; padding-left: 9px; }
.pane-btn svg { width: 18px; height: 20px; margin-right: 7px; stroke: #484644; stroke-width: 1.1; flex: none; }
.or { stroke: #e3700f; fill: #fff; }
.brush { fill: #2b88d8; stroke: #2b88d8; stroke-width: .5; }
.pane-links { margin: -1px 0 0 12px; width: 167px; flex: none; display: flex; flex-direction: column; gap: 2px; }
.pane-link { height: 30px; display: flex; align-items: center; font-size: 14.3px; color: #323130; white-space: nowrap; }
.pane-link svg { width: 20px; height: 21px; margin-right: 4px; stroke: #484644; stroke-width: 1; flex: none; }
.sel { fill: #f7c27f; stroke: #c87d1c; }
.cur { fill: #fff; }
.tim { stroke: #2b88d8; fill: #fff; }
.pane-links.sync { margin-left: 26px; width: 118px; }
.sync .pane-link svg { margin-right: 6px; }
.syn { stroke: #2f8f46; stroke-width: 2; }
.off { color: #c8c6c4; }
.pane-link.off svg { stroke: #c8c6c4; }
.ph { stroke: #7cb7e8; fill: #fff; }
.collapse-ribbon { position: absolute; right: 5px; bottom: 9px; width: 10px; height: 6px; stroke: #201f1e; stroke-width: 1.5; }

/* main */
.main { height: 790px; flex: none; display: flex; }
.nav { width: 50px; flex: none; background: #f3f2f1; border-right: 1px solid #e1dfdd; }
.nav-item { height: 50px; display: flex; align-items: center; justify-content: center; }
.nav-item svg { width: 24px; height: 24px; stroke: #777; stroke-width: 1.1; overflow: visible; }
.nav-on { box-shadow: inset 3px 0 0 #117865; }
.nav-item.nav-on svg { width: 18px; height: 18px; stroke: #222; }
.nav-t { font-size: 8.5px; font-weight: 700; fill: #777; stroke: none; }
.center { width: 1377px; flex: none; display: flex; flex-direction: column; background: #fff; }
.canvas-row { height: 746px; display: flex; }
.canvas { width: 1337px; flex: none; position: relative; padding: 0 11px 0 12px; border-right: 1px solid #c8c6c4; height: 746px; }
.links { position: absolute; left: 0; top: 0; width: 1337px; height: 746px; }
.lk { stroke: #ebebeb; stroke-width: 1.1; }
.lk-on { stroke: #118dff; stroke-width: 1.6; }
.tree {
  position: relative; height: 738px;
  border-left: 2px dotted #605e5c; border-right: 2px dotted #605e5c; border-bottom: 2px dotted #605e5c;
  display: flex; gap: 51px; padding: 55px 0 0 73px;
}
.col { width: 133px; flex: none; }
.col-root { padding-top: 219px; }
.head { height: 21px; border-bottom: 2px solid #118dff; display: flex; justify-content: space-between; font-size: 12.5px; font-weight: 500; line-height: 18px; color: #333; letter-spacing: .6px; }
.head svg { width: 8px; height: 8px; stroke: #aaa; stroke-width: 1.3; margin-top: 6px; }
.sub { height: 22px; font-size: 11px; line-height: 22px; color: #666; }
.nodes { padding-top: 84px; }
.col-last .nodes { padding-top: 54px; }
.node { height: 61px; }
.track { height: 11px; background: #ebebeb; position: relative; }
.picked { outline: 1px solid #cfcfcf; outline-offset: -1px; }
.fill { height: 11px; background: #118dff; }
.lbl { margin: 3px 0 0 5px; font-size: 11.6px; line-height: 14px; color: #444; white-space: nowrap; }
.col-root .lbl, .col-last .lbl { margin-top: 2px; }
.sel-l { font-weight: 700; color: #333; }
.val { margin-left: 5px; font-size: 11.3px; line-height: 14px; color: #666; }
.filters { width: 40px; flex: none; background: #fff; position: relative; display: flex; flex-direction: column; padding: 17px 0 0 12px; }
.filters svg { stroke: #323130; stroke-width: 1.2; }
.f-coll { width: 16px; height: 14px; }
.f-ic { width: 14px; height: 14px; margin: 22px 0 0 4px; }
.f-text { writing-mode: vertical-rl; align-self: flex-start; font-size: 18px; font-weight: 600; margin: 9px 0 0 -1px; line-height: 20px; color: #323130; }
.pagebar { height: 44px; display: flex; font-size: 14px; color: #323130; background: #fff; }
.views { width: 161px; position: relative; flex: none; border-right: 1px solid #c8c6c4; display: flex; padding-left: 14px; }
.view-btn { width: 30px; height: 38px; border-bottom: 3px solid #117865; padding: 9px 0 0 2px; }
.view-btn svg { width: 24px; height: 18px; stroke: #444; stroke-width: 1.1; }
.phone { width: 15px; height: 25px; margin: 6px 0 0 32px; stroke: #555; stroke-width: 1.1; }
.arr { position: absolute; top: 17px; width: 0; height: 0; border: 6px solid transparent; }
.arr-l { left: 118px; border-right: 5px solid #c8c6c4; border-left: 0; }
.arr-r { left: 146px; border-left: 5px solid #c8c6c4; border-right: 0; }
.ptab { height: 44px; line-height: 44px; text-align: center; border-right: 1px solid #d2d0ce; flex: none; position: relative; }
.w-ai { width: 113px; }
.w-dt { width: 188px; border-bottom: 5px solid #117865; font-weight: 600; letter-spacing: -.1px; padding-right: 0; }
.ptab b { position: absolute; right: 4px; top: -9px; font-size: 13px; }
.w-p1 { width: 95px; }
.w-sb { width: 110px; }
.w-p2 { width: 96px; border-right: 0; }
.ptab-add { width: 49px; height: 44px; background: #117865; color: #fff; text-align: center; font-size: 26px; font-weight: 700; line-height: 40px; }

/* build pane */
.build { width: 226px; flex: none; background: #f3f2f1; border-right: 1px solid #e1dfdd; padding: 0 0 0 11px; position: relative; }
.pane-head { height: 50px; display: flex; align-items: center; position: relative; }
.pane-head h2 { margin: 0; font-size: 18px; font-weight: 600; color: #252423; }
.dots { position: absolute; font-size: 17px; letter-spacing: 3px; color: #252423; font-weight: 700; }
.dbl { position: absolute; width: 15px; height: 14px; stroke: #252423; stroke-width: 1; }
.build .dots { left: 160px; }
.build .dbl { left: 190px; }
.p-label { font-size: 14.5px; height: 22px; line-height: 15px; color: #323130; }
.viz-box { width: 205px; height: 305px; background: #fff; border: 1px solid #a19f9d; border-radius: 2px; padding: 7px 0 0 9px; }
.viz-grid { display: grid; grid-template-columns: repeat(6, 23px); column-gap: 9.4px; row-gap: 9.5px; }
.vi { width: 23px; height: 23px; stroke: #444; stroke-width: 1.1; overflow: visible; }
.bl { fill: #71afe5; stroke: #1a6fb5; }
.gr { fill: #bdbdbd; stroke: #777; }
.gr2 { fill: #8f8f8f; stroke: #555; }
.wh { fill: #fff; stroke: #777; }
.bs { stroke: #2b88d8; }
.bs2 { stroke: #1a6fb5; stroke-width: 2; }
.bs3 { stroke: #1a6fb5; stroke-width: 1.6; }
.or2 { fill: #e8901f; stroke: none; }
.fk { fill: #333; stroke: none; }
.fb { fill: #71afe5; stroke: none; }
.ring { stroke: #2b88d8; stroke-width: 5; }
.ring2 { stroke: #8abfe9; stroke-width: 5; }
.earth { fill: #fff; stroke: #444; }
.land { fill: #2f8f46; stroke: none; }
.wb { fill: #fff; stroke: #2b88d8; }
.arrow { fill: #45a3dc; stroke: none; }
.arrow2 { fill: #1a6fb5; stroke: none; }
.t123 { font: 700 8.5px "Open Sans", sans-serif; fill: #2b88d8; stroke: none; }
.tg { fill: #5fb86c; stroke: none; }
.tr { fill: #e0505a; stroke: none; }
.fn { fill: #fff; stroke: #333; stroke-width: 1.3; }
.top { fill: #666; stroke: #666; }
.mat { fill: #2b88d8; stroke: none; }
.tr-l { font: 700 20px "Open Sans", sans-serif; fill: #2178b8; stroke: none; }
.py { font-size: 19px; }
.bl2 { fill: #71afe5; stroke: #1a6fb5; }
.gc { fill: #999; stroke: none; }
.bub { fill: #fff; stroke: #1a6fb5; stroke-width: 1.4; }
.bc { fill: #fff; stroke: #2b88d8; }
.bolt { fill: #e8901f; stroke: #a85c10; stroke-width: .5; }
.ta { font: 11px "Open Sans", sans-serif; fill: #2b88d8; stroke: none; }
.arc { fill: #fff; stroke: #1a6fb5; stroke-width: 1.4; }
.arc2 { fill: #4f95cf; stroke: none; }
.pin { fill: #e3700f; stroke: none; }
.dot-o { fill: #d0651a; stroke: none; }
.pa { stroke: #8a3fa8; stroke-width: 1.4; fill: #fff; }
.au { stroke: #2b88d8; stroke-width: 1.3; fill: #fff; }
.more-viz { font-size: 15px; font-weight: 700; line-height: 18px; text-align: center; color: #323130; }
.viz-sep { height: 1px; background: #a19f9d; margin: 8px 9px 7px -5px; }
.tbc { font: 700 10px "Liberation Mono", monospace; fill: #ddd; stroke: none; }
.tg2 { fill: #3fc25b; stroke: none; }
.c1 { fill: #c65b3c; stroke: none; }
.c2 { fill: #e8c38e; stroke: none; }
.c3 { fill: #3a79b8; stroke: none; }
.y1 { stroke: #444; stroke-width: 3; stroke-dasharray: 3 2; }
.y2 { stroke: #f2c811; stroke-width: 3; stroke-dasharray: 4 2; }
.y3 { stroke: #f2c811; stroke-width: 1.5; }
.y4 { stroke: #333; stroke-width: 1.5; }
.y5 { stroke: #f2c811; stroke-width: 2.5; }
.y6 { fill: #f2c811; stroke: none; }
.p1 { stroke: #ef5fa7; stroke-width: 2; }
.p2 { stroke: #9a7fe0; stroke-width: 2; }
.p3 { stroke: #bfe0d6; stroke-width: 2; }
.p-data { margin-top: 10px; height: 25px; line-height: 22px; }
.add-wrap { width: 205px; height: 50px; border: 1px dashed #605e5c; padding: 5px; }
.add-btn { width: 193px; height: 38px; background: #fff; border: 1px solid #605e5c; border-radius: 2px; font: 600 13.5px "Open Sans", sans-serif; color: #323130; display: block; }

/* data pane */
.data { width: 227px; flex: none; background: #f3f2f1; position: relative; }
.data .pane-head { padding-left: 12px; }
.data .dots { left: 166px; }
.data .dbl { left: 200px; }
.d-search { margin: 7px 0 0 6px; width: 214px; height: 30px; background: #fff; border: 1px solid #d2d0ce; border-radius: 4px; display: flex; align-items: center; padding-left: 14px; font-size: 16.3px; color: #6d6b69; }
.d-search svg { width: 18px; height: 18px; stroke: #484644; stroke-width: 1.2; margin-right: 9px; }
.d-list { margin-top: 1.5px; }
.row { height: 30px; display: flex; align-items: center; padding-left: 36px; font-size: 14px; color: #3b3a39; white-space: nowrap; }
.first .cb { border-top-color: transparent; }
.l1 { padding-left: 55px; }
.l2 { padding-left: 74px; }
.chev { width: 20px; flex: none; }
.chev svg { width: 14px; height: 8px; stroke: #484644; stroke-width: 1; }
.chev .chev-r { width: 8px; height: 14px; margin-left: 4px; }
.cb { width: 15px; height: 15px; border: 1px solid #8a8886; border-radius: 2px; flex: none; }
.ico { width: 15px; height: 15px; margin: 0 7px 0 11px; flex: none; }
.ico svg { width: 15px; height: 15px; stroke: #484644; stroke-width: 1.1; }
.scrollbar { position: absolute; left: 211px; top: 280px; width: 10px; height: 500px; background: #868686; }

/* rail */
.rail { width: 39px; flex: none; background: #fafafa; border-left: 1px solid #e1dfdd; position: relative; }
.rail-btn { height: 40px; display: flex; align-items: center; justify-content: center; }
.rail-btn.on { background: #ebebeb; border: 1px solid #8a8886; height: 39.5px; }
.rail-btn svg { width: 22px; height: 24px; stroke: #3b3a39; stroke-width: 1.2; }
.rail-gear { position: absolute; left: 0; right: 0; bottom: 0; height: 40px; border-top: 1px solid #e1dfdd; display: flex; align-items: center; justify-content: center; }
.rail-gear svg { width: 24px; height: 24px; stroke: #3b3a39; stroke-width: 1.2; }

/* status */
.status { height: 29px; flex: none; border-top: 1px solid #e1dfdd; background: #f3f2f1; display: flex; align-items: center; justify-content: space-between; position: relative; }
.st-page { margin: 1px 0 0 5px; font-size: 14.5px; color: #484644; }
.zoom { display: flex; align-items: center; margin-right: 21px; }
.z-minus, .z-plus { font-weight: 700; font-size: 16px; color: #484644; line-height: 16px; }
.z-track { width: 125px; height: 1px; background: #605e5c; position: relative; margin: 0 7px 0 6px; }
.z-thumb { position: absolute; left: 47px; top: -6px; width: 5px; height: 13px; background: #605e5c; }
.z-tick { position: absolute; left: 62px; top: -3px; width: 1px; height: 7px; background: #605e5c; }
.z-plus { font-size: 20px; }
.z-val { margin: 0 25px 0 17px; font-size: 14px; color: #605e5c; }
.z-fit { width: 20px; height: 16px; stroke: #484644; stroke-width: 1; }
```
